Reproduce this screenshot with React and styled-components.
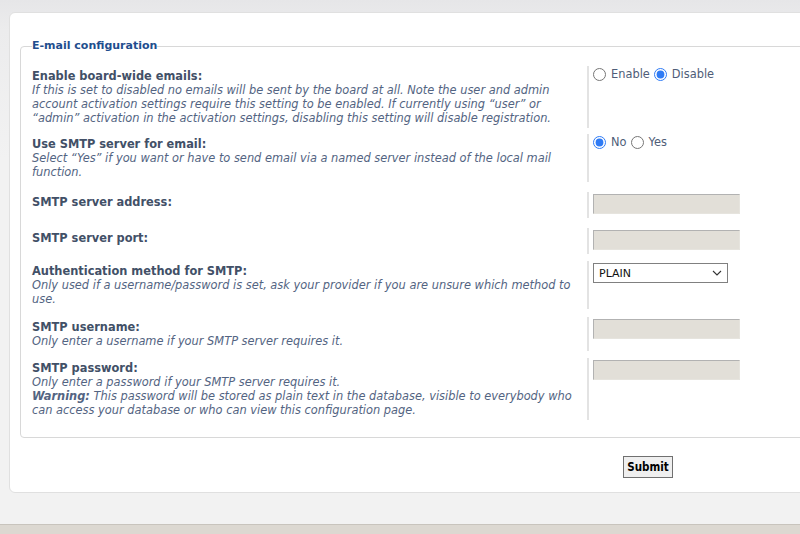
import React from 'react'
import styled, { createGlobalStyle } from 'styled-components'

const rows = [
  {
    label: 'Enable board-wide emails:',
    explain: [
      'If this is set to disabled no emails will be sent by the board at all. Note the user and admin account activation settings require this setting to be enabled. If currently using \u201cuser\u201d or \u201cadmin\u201d activation in the activation settings, disabling this setting will disable registration.'
    ],
    type: 'radio',
    name: 'email_enable',
    options: ['Enable', 'Disable'],
    checked: 'Disable',
    space: 6
  },
  {
    label: 'Use SMTP server for email:',
    explain: ['Select \u201cYes\u201d if you want or have to send email via a named server instead of the local mail function.'],
    type: 'radio',
    name: 'smtp_delivery',
    options: ['No', 'Yes'],
    checked: 'No',
    space: 10
  },
  { label: 'SMTP server address:', type: 'text', space: 10 },
  { label: 'SMTP server port:', type: 'text', space: 7 },
  {
    label: 'Authentication method for SMTP:',
    explain: ['Only used if a username/password is set, ask your provider if you are unsure which method to use.'],
    type: 'select',
    space: 8
  },
  {
    label: 'SMTP username:',
    explain: ['Only enter a username if your SMTP server requires it.'],
    type: 'text',
    space: 7
  },
  {
    label: 'SMTP password:',
    explain: ['Only enter a password if your SMTP server requires it.'],
    warning: 'This password will be stored as plain text in the database, visible to everybody who can access your database or who can view this configuration page.',
    type: 'text',
    space: 0
  }
]

class App extends React.Component {
  renderField(row) {
    if (row.type === 'radio') {
      return (
        <RadioGroup>
          {row.options.map(opt => (
            <RadioLabel key={opt}>
              <Radio type="radio" name={row.name} defaultChecked={opt === row.checked} />
              {opt}
            </RadioLabel>
          ))}
        </RadioGroup>
      )
    }
    if (row.type === 'select') {
      return (
        <SelectWrap>
          <Select defaultValue="PLAIN">
            <option>PLAIN</option>
            <option>LOGIN</option>
            <option>CRAM-MD5</option>
            <option>DIGEST-MD5</option>
            <option>POP-BEFORE-SMTP</option>
          </Select>
          <Chevron width="10" height="6" viewBox="0 0 10 6">
            <path d="M1 1 L5 5 L9 1" fill="none" stroke="#333" strokeWidth="1.1" />
          </Chevron>
        </SelectWrap>
      )
    }
    return <TextInput type="text" />
  }

  render() {
    return (
      <Page>
        <GlobalStyle />
        <Main>
          <Panel>
            <Fieldset>
              <Legend>E-mail configuration</Legend>
              <List>
                {rows.map(row => (
                  <Row key={row.label} $space={row.space}>
                    <Dt>
                      <Label>{row.label}</Label>
                      {row.explain && row.explain.map(t => <Explain key={t}>{t}</Explain>)}
                      {row.warning && (
                        <Explain>
                          <strong>Warning:</strong> {row.warning}
                        </Explain>
                      )}
                    </Dt>
                    <Dd>{this.renderField(row)}</Dd>
                  </Row>
                ))}
              </List>
            </Fieldset>
            <SubmitBar>
              <SubmitButton type="button">Submit</SubmitButton>
            </SubmitBar>
          </Panel>
        </Main>
        <Footer />
      </Page>
    )
  }
}

export default App

const GlobalStyle = createGlobalStyle`
  html, body {
    margin: 0;
    padding: 0;
  }
  body {
    width: 800px;
    height: 534px;
    overflow: hidden;
    background: linear-gradient(#e6e6e8 0, #ececed 30px, #f2f2f2 160px);
    font-family: "DejaVu Sans", Verdana, sans-serif;
  }
`

const Page = styled.div`
  display: flex;
  flex-direction: column;
  height: 534px;
`

const Main = styled.div`
  flex: 1;
  padding: 12px 0 0 9px;
`

const Footer = styled.div`
  height: 9px;
  border-top: 1px solid #c8c4bd;
  background: #dcd8d1;
`

const Panel = styled.div`
  width: 1278px;
  height: 481px;
  box-sizing: border-box;
  background: #fff;
  border: 1px solid #e0e0e0;
  border-radius: 6px;
  padding: 25px 10px 0 10px;
`

const Fieldset = styled.fieldset`
  margin: 0;
  padding: 0 11px 17px;
  border: 1px solid #d8d8d8;
  border-radius: 4px;
`

const Legend = styled.legend`
  padding: 0;
  font-size: 11px;
  line-height: 16px;
  font-weight: bold;
  color: #1f4e8e;
`

const List = styled.div`
  padding-top: 12px;
  display: flex;
  flex-direction: column;
`

const Row = styled.div`
  display: flex;
  align-items: stretch;
  margin-bottom: ${p => p.$space}px;
`

const Dt = styled.div`
  width: 551px;
  padding: 3px 4px 3px 0;
  font-size: 11.4px;
  line-height: 14px;
`

const Label = styled.div`
  font-weight: bold;
  color: #425067;
`

const Explain = styled.div`
  font-style: italic;
  color: #536482;

  strong {
    font-weight: bold;
  }
`

const Dd = styled.div`
  border-left: 2px solid #e3e3e3;
  padding: 1px 0 4px 4px;
`

const RadioGroup = styled.div`
  display: flex;
  align-items: center;
  gap: 4px;
`

const RadioLabel = styled.label`
  display: flex;
  align-items: center;
  gap: 5px;
  font-size: 11.4px;
  line-height: 14px;
  color: #4f5d78;
`

const Radio = styled.input`
  margin: 0;
  width: 13px;
  height: 13px;
  accent-color: #2f7bf5;
`

const TextInput = styled.input`
  display: block;
  margin: 1px 0 0;
  width: 147px;
  height: 20px;
  box-sizing: border-box;
  background: #e2dfd8;
  border: 1px solid;
  border-color: #b2b2b2 #e6e4de #e6e4de #b2b2b2;
  outline: none;
`

const SelectWrap = styled.div`
  position: relative;
  width: 135px;
  margin-top: 1px;
`

const Select = styled.select`
  display: block;
  appearance: none;
  margin: 0;
  width: 135px;
  height: 20px;
  box-sizing: border-box;
  padding: 0 0 0 5px;
  background: #fff;
  border: 1px solid #808080;
  border-radius: 0;
  font-family: "DejaVu Sans", Verdana, sans-serif;
  font-size: 11px;
  color: #111;
`

const Chevron = styled.svg`
  position: absolute;
  right: 6px;
  top: 7px;
  pointer-events: none;
`

const SubmitBar = styled.div`
  padding-top: 18px;
  text-align: center;
`

const SubmitButton = styled.button`
  height: 22px;
  padding: 0 3px;
  background: #efefef;
  border: 1px solid #707070;
  font-family: "DejaVu Sans Condensed", "DejaVu Sans", sans-serif;
  font-weight: bold;
  font-size: 11.5px;
  color: #000;
`
